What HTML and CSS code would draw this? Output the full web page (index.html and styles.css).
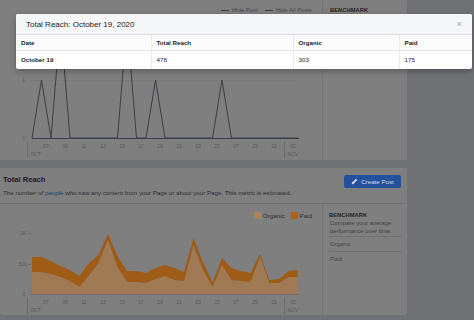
FILE: index.html
```html
<!DOCTYPE html>
<html lang="en">
<head>
<meta charset="utf-8">
<title>Total Reach</title>
<link rel="stylesheet" href="styles.css">
</head>
<body>
<div class="page">
  <main class="main">
    <section class="card card-top">
      <div class="chart-col">
        <div class="legend legend-lines">
          <span class="lg-item"><i class="dash"></i>Hide Post</span>
          <span class="lg-item"><i class="dash"></i>Hide All Posts</span>
        </div>
        <svg class="chart" width="322" height="140" viewBox="0 20 322 140">
          <line class="grid" x1="30" y1="80.5" x2="299" y2="80.5"/>
          <text class="ax" x="25" y="82" text-anchor="end">1</text>
          <text class="ax" x="25" y="140" text-anchor="end">0</text>
          <line class="axis" x1="32" y1="138.5" x2="299" y2="138.5"/>
          <path class="posts" d="M32 138 L41.5 80 L51 138 L60.5 22 L70 138 L117.5 138 L127 22 L136.5 138 L146 138 L155.5 80 L165 138 L212.5 138 L222 80 L231.5 138 L298 138"/>
          <g class="ax" text-anchor="middle">
            <text x="46" y="148">07</text><text x="65" y="148">09</text><text x="84" y="148">11</text>
            <text x="103" y="148">13</text><text x="122" y="148">15</text><text x="141" y="148">17</text>
            <text x="160" y="148">19</text><text x="179" y="148">21</text><text x="198" y="148">23</text>
            <text x="217" y="148">25</text><text x="236" y="148">27</text><text x="255" y="148">29</text>
            <text x="274" y="148">31</text><text x="293" y="148">02</text>
            <text x="35.5" y="156">OCT</text><text x="293" y="156">NOV</text>
          </g>
          <line class="tick" x1="27.5" y1="141" x2="27.5" y2="158"/>
          <line class="tick" x1="284.5" y1="141" x2="284.5" y2="158"/>
        </svg>
      </div>
      <aside class="side">
        <div class="side-title">BENCHMARK</div>
      </aside>
    </section>

    <section class="card card-reach">
      <header class="card-head">
        <div class="head-text">
          <h2 class="card-title">Total Reach</h2>
          <p class="card-desc">The number of <a class="link">people</a> who saw any content from your Page or about your Page. This metric is estimated.</p>
        </div>
        <button class="btn-create">
          <svg class="pencil" width="7" height="7" viewBox="0 0 10 10"><path d="M1 9 L1.6 6.6 L7.2 1 L9 2.8 L3.4 8.4 Z" fill="currentColor"/></svg>
          Create Post
        </button>
      </header>
      <div class="card-body">
        <div class="chart-col">
          <div class="legend legend-swatch">
            <span class="lg-item"><i class="sw sw-org"></i>Organic</span>
            <span class="lg-item"><i class="sw sw-paid"></i>Paid</span>
          </div>
          <svg class="chart" width="322" height="89" viewBox="0 226 322 89">
            <text class="ax" x="26" y="235" text-anchor="end">1K</text>
            <text class="ax" x="27" y="266" text-anchor="end">500</text>
            <text class="ax" x="25" y="296" text-anchor="end">0</text>
            <line class="tick" x1="28" y1="233.5" x2="31" y2="233.5"/>
            <line class="tick" x1="28" y1="264.5" x2="31" y2="264.5"/>
            <polygon class="area-org" points="32,294 32,272 41.5,272 51,274 60.5,277 70,281 79.5,287 89,275 98.5,263 108,240 117.5,267 127,282 136.5,282 146,283 155.5,279 165,276 174.5,280 184,281 193.5,245 203,270 212.5,287 222,265 231.5,280 241,281 250.5,282 260,257 269.5,283 279,283 288.5,277 298,277 298,294"/>
            <polygon class="area-paid" points="32,257 41.5,257 51,261 60.5,266 70,270 79.5,276 89,263 98.5,255 108,234 117.5,256 127,271 136.5,271 146,273 155.5,268 165,265 174.5,268 184,272 193.5,238 203,262 212.5,282 222,258 231.5,268 241,271 250.5,273 260,254 269.5,280 279,279 288.5,271 298,270 298,277 288.5,277 279,283 269.5,283 260,257 250.5,282 241,281 231.5,280 222,265 212.5,287 203,270 193.5,245 184,281 174.5,280 165,276 155.5,279 146,283 136.5,282 127,282 117.5,267 108,240 98.5,263 89,275 79.5,287 70,281 60.5,277 51,274 41.5,272 32,272"/>
            <line class="axis-lt" x1="30" y1="294.5" x2="299" y2="294.5"/>
            <g class="ax" text-anchor="middle">
              <text x="46" y="304">07</text><text x="65" y="304">09</text><text x="84" y="304">11</text>
              <text x="103" y="304">13</text><text x="122" y="304">15</text><text x="141" y="304">17</text>
              <text x="160" y="304">19</text><text x="179" y="304">21</text><text x="198" y="304">23</text>
              <text x="217" y="304">25</text><text x="236" y="304">27</text><text x="255" y="304">29</text>
              <text x="274" y="304">31</text><text x="293" y="304">02</text>
              <text x="35.5" y="312">OCT</text><text x="293" y="312">NOV</text>
            </g>
            <line class="tick" x1="27.5" y1="297" x2="27.5" y2="315"/>
            <line class="tick" x1="284.5" y1="297" x2="284.5" y2="315"/>
          </svg>
        </div>
        <aside class="side side-bm">
          <div class="side-title">BENCHMARK</div>
          <p class="side-desc">Compare your average<br>performance over time.</p>
          <div class="bm-item">Organic</div>
          <div class="bm-item">Paid</div>
        </aside>
      </div>
    </section>
  </main>

  <div class="modal" role="dialog">
    <div class="modal-head">
      <h3 class="modal-title">Total Reach: October 19, 2020</h3>
      <span class="modal-close">×</span>
    </div>
    <table class="modal-table">
      <colgroup><col class="c1"><col class="c2"><col class="c3"><col class="c4"></colgroup>
      <thead>
        <tr><th>Date</th><th>Total Reach</th><th>Organic</th><th>Paid</th></tr>
      </thead>
      <tbody>
        <tr><td class="strong">October 19</td><td>478</td><td>303</td><td>175</td></tr>
      </tbody>
    </table>
  </div>
</div>
</body>
</html>
```

FILE: styles.css
```css
* { box-sizing: border-box; margin: 0; padding: 0; }
html, body { width: 474px; height: 320px; overflow: hidden; }
body {
  background: #707174;
  font-family: "Liberation Sans", Arial, sans-serif;
  color: #1e1f22;
}
.page { position: relative; width: 474px; height: 320px; }
.main { width: 407px; }

.card { background: #7f7f80; }
.card-top { height: 160px; display: flex; }
.card-reach { margin-top: 8px; height: 147px; border-radius: 0 0 3px 3px; display: flex; flex-direction: column; }

.chart-col { width: 322px; flex: none; }
.chart { display: block; }

.legend { display: flex; justify-content: flex-end; align-items: center; padding-right: 10px; color: #48494c; }
.legend-lines { height: 20px; font-size: 5.9px; gap: 7px; }
.legend-lines .lg-item { display: flex; align-items: center; gap: 3px; }
.dash { display: block; width: 8px; height: 1px; background: #3b3e48; }

.legend-swatch { height: 22px; font-size: 6.2px; gap: 6px; color: #2d2e31; }
.legend-swatch .lg-item { display: flex; align-items: center; gap: 2px; }
.sw { display: block; width: 7px; height: 7px; }
.sw-org { background: #a8835e; }
.sw-paid { background: #a9631c; }

.side { flex: 1; border-left: 1px solid #747477; padding: 6px 6px 0 7px; }
.side-title { font-size: 5.7px; font-weight: bold; line-height: 8px; color: #222326; letter-spacing: 0.1px; }
.side-bm { padding-top: 7px; padding-left: 6px; }
.side-desc { font-size: 6px; line-height: 8px; color: #404144; padding-left: 1px; }
.bm-item { border-top: 1px solid #717174; font-size: 6px; line-height: 8px; padding: 3px 0 3px 1px; color: #47484b; }
.side-desc + .bm-item { margin-top: 1px; }

.card-head { height: 36px; display: flex; align-items: flex-start; justify-content: space-between; padding: 7px 6px 0 3px; border-bottom: 1px solid #717174; flex: none; }
.card-title { font-size: 7.6px; font-weight: bold; line-height: 10px; color: #1b1c1f; }
.card-desc { margin-top: 4px; font-size: 6.2px; line-height: 8px; white-space: nowrap; color: #2c2d30; }
.link { color: #23416f; }
.btn-create {
  width: 57px; height: 13px; border: none; border-radius: 2px;
  background: #23519c; color: #d6dbe6;
  font-family: inherit; font-size: 6.2px;
  display: flex; align-items: center; justify-content: center; gap: 3px;
}
.pencil { display: block; }
.card-body { flex: 1; display: flex; }

.ax { font-family: "Liberation Sans", Arial, sans-serif; font-size: 5px; fill: #58595c; }
.grid { stroke: #7a7a7b; stroke-width: 1; }
.axis { stroke: #3b3e48; stroke-width: 1; }
.axis-lt { stroke: #6e6e70; stroke-width: 1; }
.tick { stroke: #6c6c6f; stroke-width: 1; }
.posts { fill: none; stroke: #3b3e48; stroke-width: 1; stroke-linejoin: miter; }
.area-org { fill: #a07a55; }
.area-paid { fill: #9f5c16; }

.modal {
  position: absolute; left: 16px; top: 14px; width: 456px;
  background: #ffffff; border-radius: 2px;
  box-shadow: 0 2px 6px rgba(0, 0, 0, 0.3);
  overflow: hidden;
}
.modal-head {
  height: 21px; display: flex; align-items: center; justify-content: space-between;
  padding: 0 10px 0 10px; background: #f5f6f7; border-bottom: 1px solid #dddfe2;
}
.modal-title { font-size: 8px; font-weight: normal; color: #1c1e21; }
.modal-close { font-size: 9px; color: #a0a3a8; line-height: 1; }
.modal-table { width: 100%; border-collapse: collapse; table-layout: fixed; font-size: 6.2px; color: #1c1e21; }
.c1 { width: 135px; } .c2 { width: 142px; } .c3 { width: 106px; } .c4 { width: 73px; }
.modal-table th { height: 15px; text-align: left; font-weight: bold; padding: 0 5px; border-bottom: 1px solid #e4e6e9; background: #fbfbfc; }
.modal-table td { height: 19px; text-align: left; padding: 0 5px; }
.modal-table th + th, .modal-table td + td { border-left: 1px solid #e9ebee; }
.modal-table .strong { font-weight: bold; }
```
